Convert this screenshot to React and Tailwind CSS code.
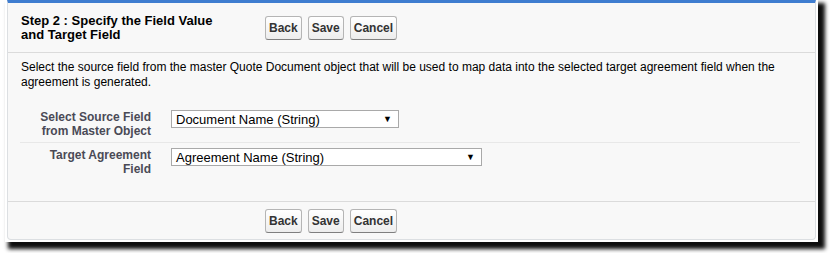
import React from "react";

const font = { fontFamily: '"Liberation Sans", Arial, sans-serif' };

function Btn({ children }) {
  return (
    <button className="h-[24px] px-[3px] rounded-[3px] border border-[#b5b5b5] border-b-[#7f7f7f] bg-[linear-gradient(#ffffff,#ededed)] text-[12px] font-bold text-[#333] leading-none">
      {children}
    </button>
  );
}

function Buttons() {
  return (
    <div className="flex gap-[6px]">
      <Btn>Back</Btn>
      <Btn>Save</Btn>
      <Btn>Cancel</Btn>
    </div>
  );
}

function FakeSelect({ value, width }) {
  return (
    <div
      className={`${width} h-[18px] border border-[#a9a9a9] bg-white flex items-center justify-between pl-[4px] pr-[6px]`}
    >
      <span className="text-[13px] text-black leading-none">{value}</span>
      <span className="text-[9px] text-black leading-none">▼</span>
    </div>
  );
}

const rows = [
  { label: ["Select Source Field", "from Master Object"], value: "Document Name (String)", width: "w-[228px]" },
  { label: ["Target Agreement", "Field"], value: "Agreement Name (String)", width: "w-[311px]" },
];

export default function App() {
  return (
    <div className="w-[830px] h-[253px] bg-white pl-[5px]" style={font}>
      <div className="w-[813px] h-[242px] bg-white pl-[2px] shadow-[5px_5px_4px_2px_rgba(0,0,0,0.95)]">
        <div className="w-[809px] h-[240px] bg-[#f8f8f8] border-t-[3px] border-t-[#3f7dd0] border-x border-b border-[#dcdfe2] rounded-b-[4px] flex flex-col">
          {/* header */}
          <div className="h-[50px] flex items-center pl-[13px] border-b border-[#dbdbdb]">
            <div className="w-[244px] text-[13px] font-bold leading-[14px] text-black">
              Step 2 : Specify the Field Value
              <br />
              and Target Field
            </div>
            <Buttons />
          </div>

          {/* body */}
          <div className="flex-1 px-[12px] pt-[7px]">
            <p className="text-[12px] leading-[15px] text-black pl-[1px]">
              Select the source field from the master Quote Document object that will be used to map data into the selected target agreement field when the agreement is generated.
            </p>
            <div className="mt-[20px] mr-[3px]">
              {rows.map((r, i) => (
                <div
                  key={i}
                  className={`flex items-start ${i === 0 ? "border-b border-[#e8e8e8] pb-[4px]" : "pt-[5px]"}`}
                >
                  <div className="w-[131px] text-right text-[12px] font-bold leading-[14px] text-[#4a4a56]">
                    {r.label[0]}
                    <br />
                    {r.label[1]}
                  </div>
                  <div className="pl-[20px]">
                    <FakeSelect value={r.value} width={r.width} />
                  </div>
                </div>
              ))}
            </div>
          </div>

          {/* footer */}
          <div className="h-[38px] border-t border-[#dbdbdb] flex items-center pl-[257px]">
            <Buttons />
          </div>
        </div>
      </div>
    </div>
  );
}
